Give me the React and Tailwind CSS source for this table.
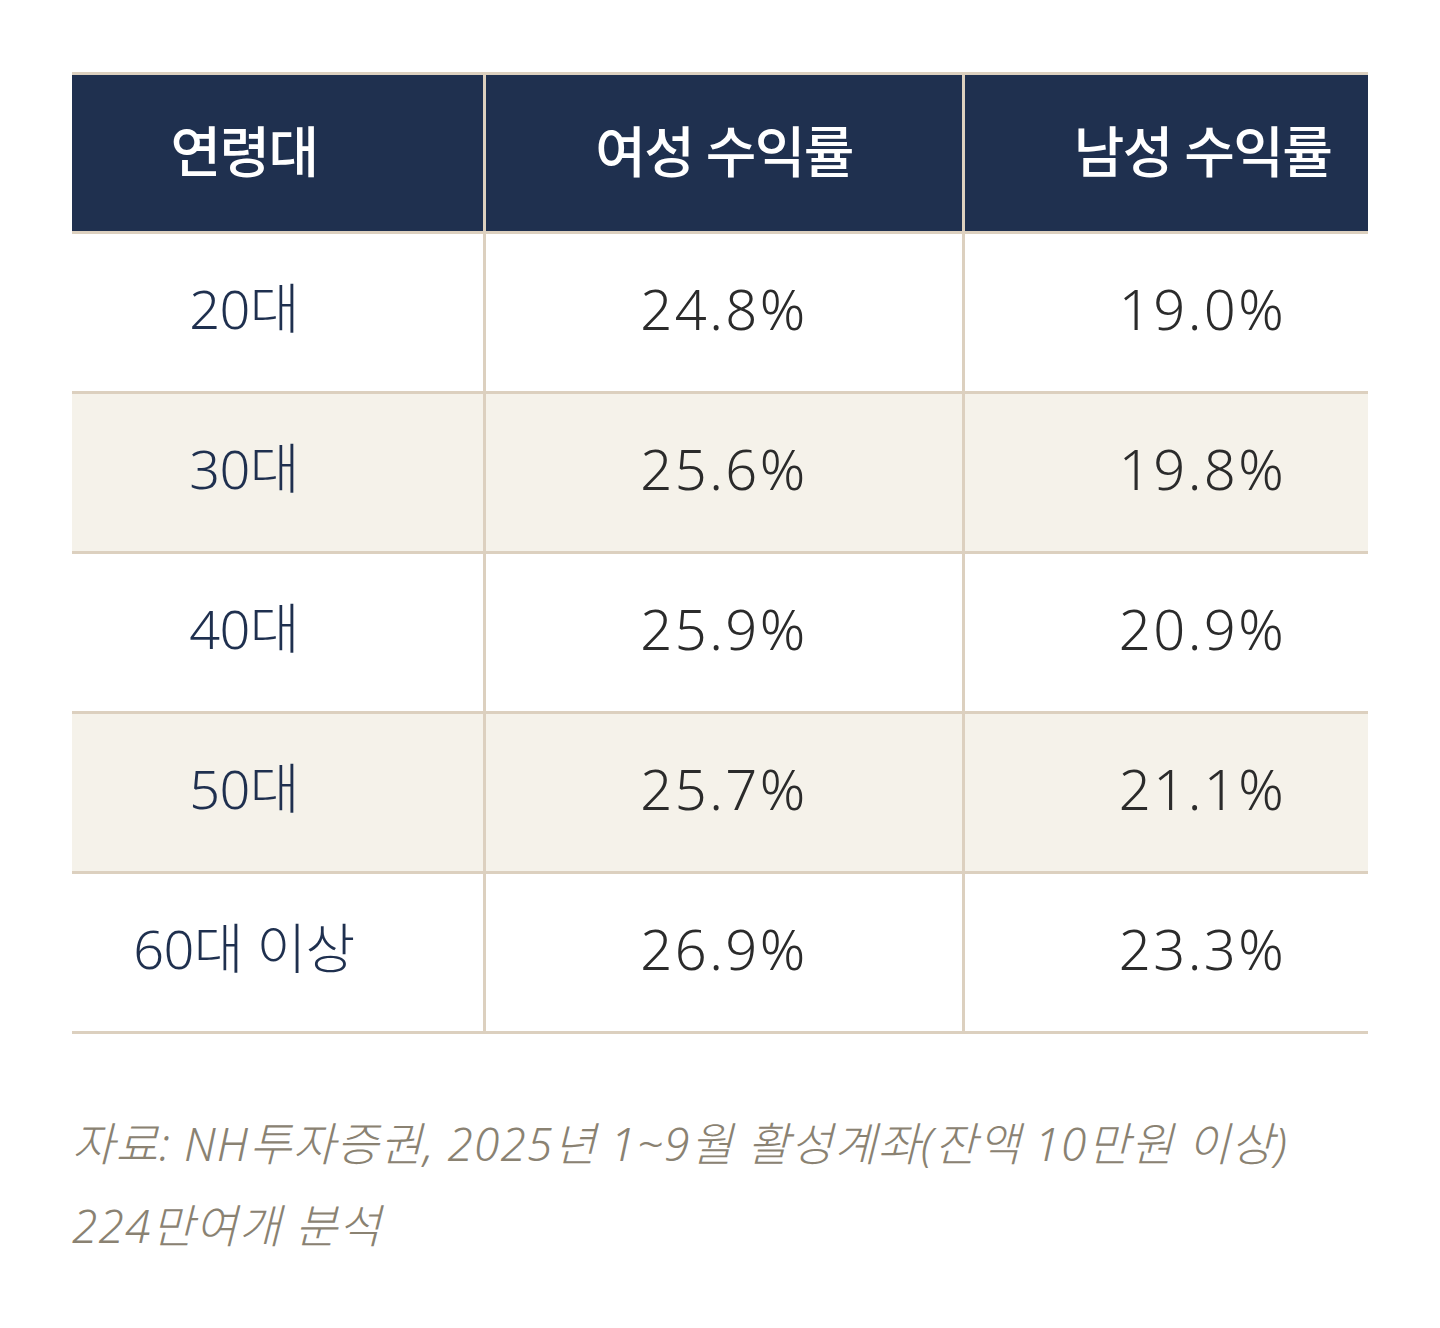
const rows = [
  { age: "20대", female: "24.8%", male: "19.0%" },
  { age: "30대", female: "25.6%", male: "19.8%" },
  { age: "40대", female: "25.9%", male: "20.9%" },
  { age: "50대", female: "25.7%", male: "21.1%" },
  { age: "60대 이상", female: "26.9%", male: "23.3%" },
];

const font = { fontFamily: '"Noto Sans", "Noto Sans CJK KR", sans-serif' };

export default function App() {
  return (
    <div className="min-h-screen bg-white pt-[72px] px-[72px]" style={font}>
      {/* 표 */}
      <div className="grid w-[1296px] grid-cols-[411px_476px_403px] gap-[3px] bg-[#dcd0bf] py-[3px]">
        <div className="flex h-[156px] items-center justify-center bg-[#1f304f] pr-[67px] pb-[4px] text-[55px] font-medium tracking-[-0.03em] text-white">
          연령대
        </div>
        <div className="flex h-[156px] items-center justify-center bg-[#1f304f] pb-[4px] text-[55px] font-medium tracking-[-0.03em] text-white">
          여성 수익률
        </div>
        <div className="flex h-[156px] items-center justify-center bg-[#1f304f] pl-[72px] pb-[4px] text-[55px] font-medium tracking-[-0.03em] text-white">
          남성 수익률
        </div>

        {rows.map((row, i) => {
          const bg = i % 2 === 1 ? "bg-[#f5f2ea]" : "bg-white";
          return [
            <div
              key={row.age + "a"}
              className={`flex h-[157px] items-center justify-center pr-[67px] pb-[8px] text-[54px] font-light tracking-[-0.01em] text-[#1f304f] ${bg}`}
            >
              {row.age}
            </div>,
            <div
              key={row.age + "f"}
              className={`flex h-[157px] items-center justify-center pb-[9px] text-[56px] font-light tracking-[0.045em] text-[#2b2b2b] ${bg}`}
            >
              {row.female}
            </div>,
            <div
              key={row.age + "m"}
              className={`flex h-[157px] items-center justify-center pl-[72px] pb-[9px] text-[56px] font-light tracking-[0.045em] text-[#2b2b2b] ${bg}`}
            >
              {row.male}
            </div>,
          ];
        })}
      </div>

      {/* 출처 */}
      <p className="mt-[68px] w-[1296px] text-[46px] font-light italic leading-[82px] tracking-[0.025em] text-[#8a8272]">
        자료: NH투자증권, 2025년 1~9월 활성계좌(잔액 10만원 이상)
        <br />
        224만여개 분석
      </p>
    </div>
  );
}
